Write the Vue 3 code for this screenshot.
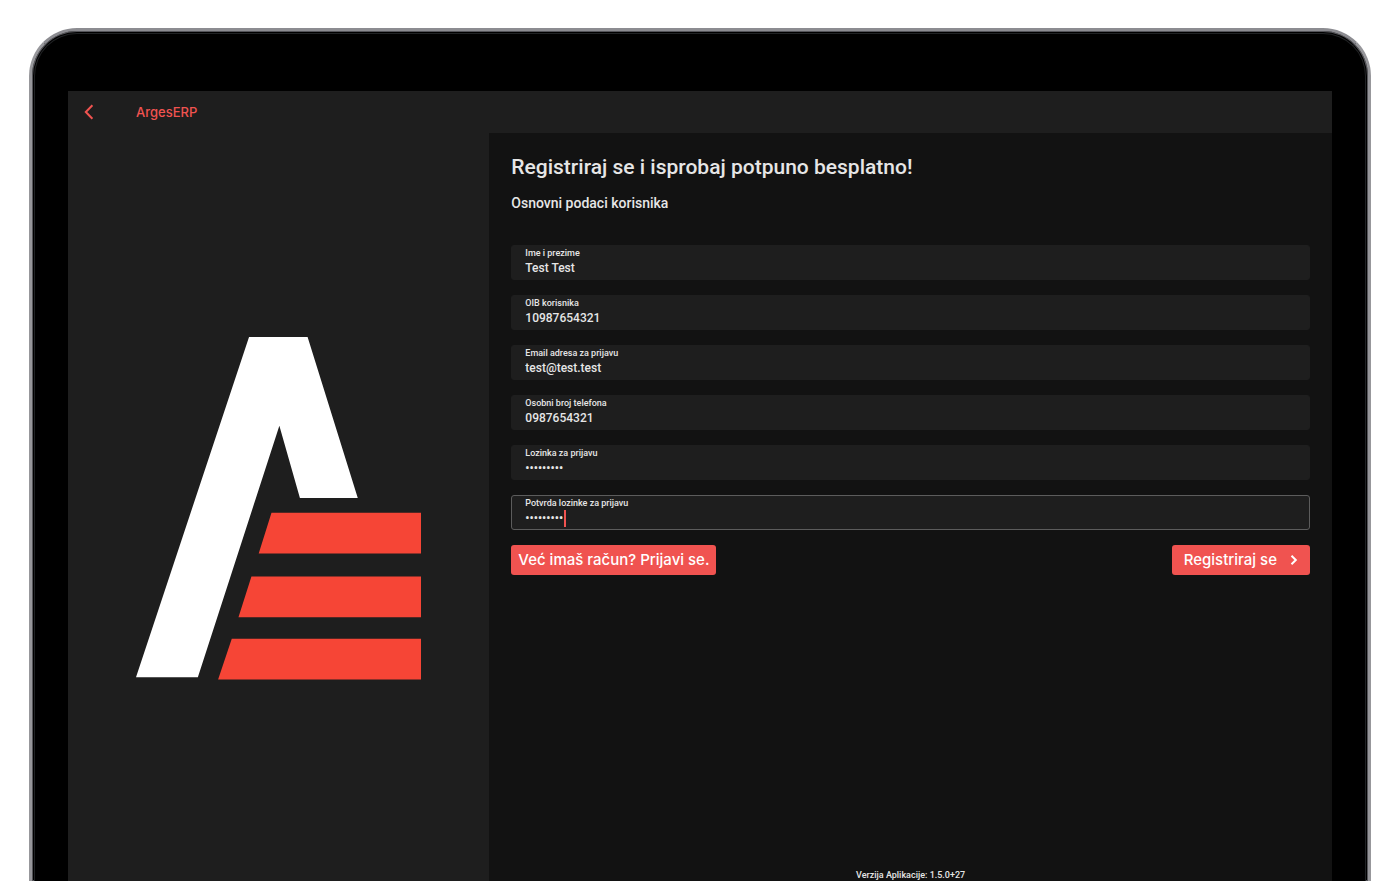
<script setup>
import { ref } from 'vue'

const fields = ref([
  { id: 'name', label: 'Ime i prezime', type: 'text', value: 'Test Test' },
  { id: 'oib', label: 'OIB korisnika', type: 'text', value: '10987654321' },
  { id: 'email', label: 'Email adresa za prijavu', type: 'email', value: 'test@test.test' },
  { id: 'phone', label: 'Osobni broj telefona', type: 'tel', value: '0987654321' },
  { id: 'password', label: 'Lozinka za prijavu', type: 'password', value: 'lozinka12' },
  { id: 'confirm', label: 'Potvrda lozinke za prijavu', type: 'password', value: 'lozinka12', active: true }
])
</script>

<template>
  <div class="stage">
    <div class="device">
      <div class="bezel">
        <div class="screen">
          <header class="bar">
            <button class="back" type="button" aria-label="Natrag">
              <svg width="10" height="16" viewBox="0 0 10 16" fill="none" stroke="currentColor" stroke-width="2">
                <path d="M8.4 1.2 1.8 8l6.6 6.8" />
              </svg>
            </button>
            <span class="brand">ArgesERP</span>
          </header>
          <div class="content">
            <aside class="side">
              <svg class="logo" viewBox="0 0 286 344" role="img" aria-label="Arges">
                <path fill="#fff" d="M113.3 0H172L222.3 161.3H164.3L143.7 89L62 341H0Z" />
                <path fill="#f64536" d="M135.8 176.2H285.7V217H123ZM115.7 240H285.7V281H102.7ZM96 302.5H285.7V343.3H82.3Z" />
              </svg>
            </aside>
            <main class="main">
              <h1>Registriraj se i isprobaj potpuno besplatno!</h1>
              <h2>Osnovni podaci korisnika</h2>
              <form class="form" @submit.prevent>
                <div v-for="f in fields" :key="f.id" class="field" :class="{ active: f.active }">
                  <label :for="f.id">{{ f.label }}</label>
                  <input :id="f.id" v-model="f.value" :type="f.type" autocomplete="off" />
                  <i v-if="f.active" class="caret"></i>
                </div>
                <div class="actions">
                  <button class="btn login" type="button">Već imaš račun? Prijavi se.</button>
                  <button class="btn register" type="submit">
                    Registriraj se
                    <svg width="8" height="10" viewBox="0 0 8 10" fill="none" stroke="currentColor" stroke-width="2">
                      <path d="M1.5 .8 5.8 5 1.5 9.2" />
                    </svg>
                  </button>
                </div>
              </form>
              <footer>Verzija Aplikacije: 1.5.0+27</footer>
            </main>
          </div>
        </div>
      </div>
    </div>
  </div>
</template>

<style>
body {
  background: #fff;
}
</style>

<style scoped>
* {
  box-sizing: border-box;
}
.stage {
  display: flex;
  min-height: 100vh;
  padding: 28px 29px 0;
  font-family: Roboto, "Noto Sans", sans-serif;
  color: #e6e6e6;
}
.device {
  display: flex;
  flex: 1;
  padding: 2px;
  padding-bottom: 0;
  border: 3px solid #97979b;
  border-top-color: #8c8c91;
  border-bottom: 0;
  border-radius: 48px 48px 0 0;
  background: #000;
  box-shadow: inset 0 0 0 1px #55555a;
}
.bezel {
  display: flex;
  flex: 1;
  padding: 57px 33px 0;
  border: 1px solid #202224;
  border-bottom: 0;
  border-radius: 43px 43px 0 0;
  background: #000;
}
.screen {
  display: flex;
  flex: 1;
  flex-direction: column;
  background: #1e1e1e;
}
.bar {
  display: flex;
  align-items: center;
  height: 42px;
  padding: 0 16px;
  color: #f05350;
}
.back {
  display: flex;
  align-items: center;
  width: 52px;
  height: 40px;
  padding: 0;
  border: 0;
  background: none;
  color: inherit;
}
.brand {
  font: 500 13px/20px Inter, sans-serif;
}
.content {
  display: grid;
  flex: 1;
  grid-template-columns: 1fr 2fr;
}
.side {
  display: flex;
  align-items: center;
  justify-content: center;
  padding: 3px 68px 0;
}
.logo {
  display: block;
  width: 100%;
}
.main {
  display: flex;
  flex-direction: column;
  padding: 22px 22px 0;
  background: #121212;
}
h1,
h2 {
  margin: 0;
  font-weight: 500;
}
h1 {
  font-size: 21px;
  line-height: 24px;
}
h2 {
  margin-top: 16px;
  font-size: 14px;
  line-height: 16px;
}
.form {
  display: flex;
  flex-direction: column;
  gap: 15px;
  margin-top: 34px;
}
.field {
  position: relative;
  display: flex;
  flex-direction: column;
  padding: 0 13px 3px;
  border: 1px solid #1e1e1e;
  border-radius: 3px;
  background: #1e1e1e;
}
.field.active {
  border-color: #5c5c5c;
}
.field label {
  font-size: 9px;
  font-weight: 500;
  line-height: 14px;
}
.field input {
  width: 100%;
  height: 16px;
  padding: 0;
  border: 0;
  outline: 0;
  background: none;
  color: inherit;
  font: 500 12px/16px Roboto, sans-serif;
}
.caret {
  position: absolute;
  bottom: 2px;
  left: 52px;
  width: 2px;
  height: 17px;
  background: #f05350;
}
.actions {
  display: flex;
  justify-content: space-between;
}
.btn {
  display: flex;
  align-items: center;
  height: 30px;
  padding: 0 7px;
  border: 0;
  border-radius: 3px;
  background: #f05350;
  color: #fff;
  font: 500 15px/20px Inter, sans-serif;
}
.register {
  gap: 13px;
  padding: 0 12px;
}
footer {
  margin-top: auto;
  font-size: 9px;
  font-weight: 500;
  line-height: 12px;
  text-align: center;
}
</style>
